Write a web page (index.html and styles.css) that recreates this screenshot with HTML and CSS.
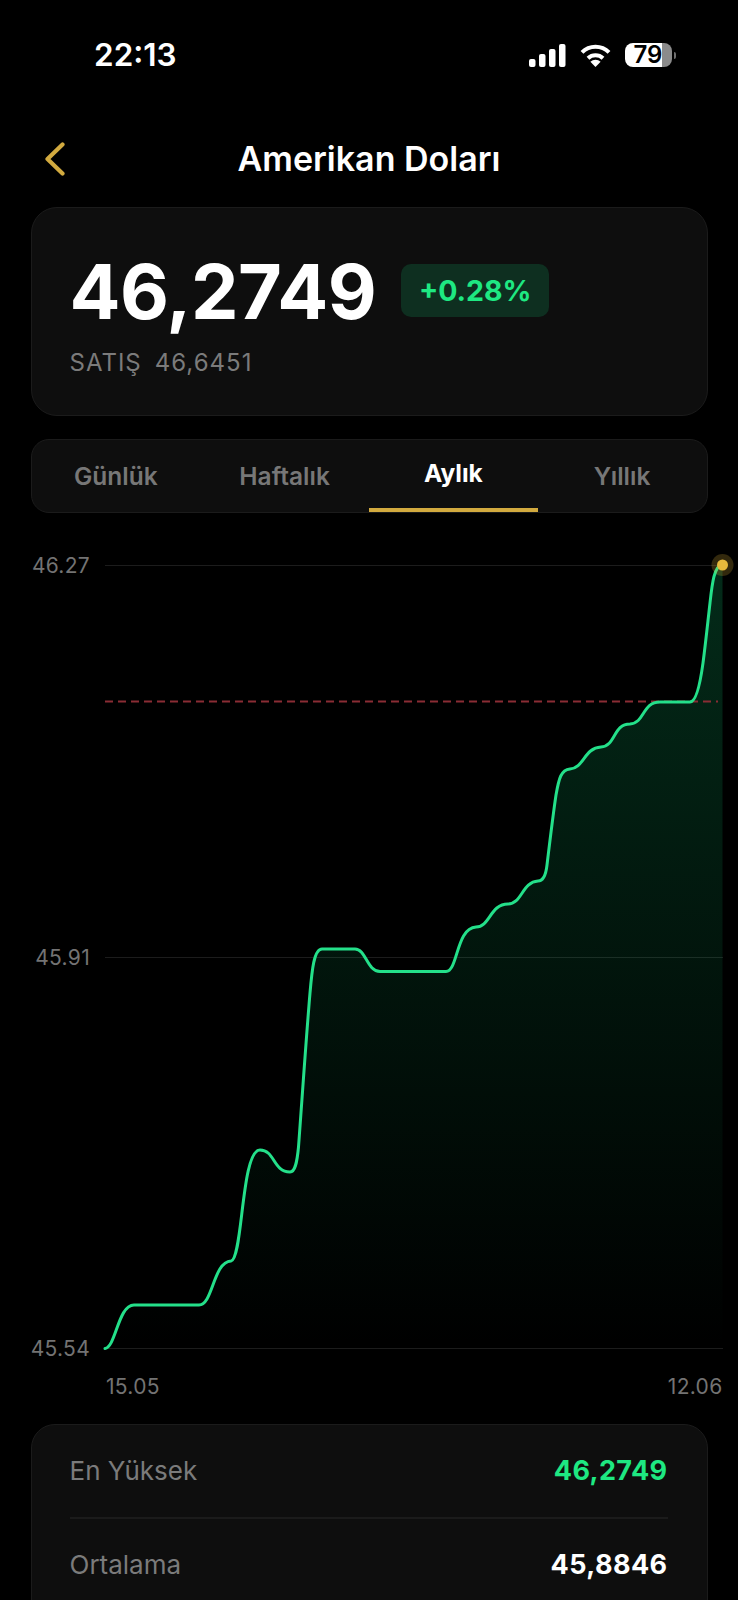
FILE: index.html
```html
<!DOCTYPE html>
<html lang="tr">
<head>
<meta charset="utf-8">
<title>Amerikan Doları</title>
<link rel="stylesheet" href="styles.css">
</head>
<body>
<div class="status">
  <span class="time">22:13</span>
  <div class="status-icons">
    <svg class="signal" width="37" height="23" viewBox="0 0 37 23"><rect x="0" y="15" width="6.5" height="8" rx="2"/><rect x="10" y="10" width="6.5" height="13" rx="2"/><rect x="20" y="5" width="6.5" height="18" rx="2"/><rect x="30" y="0" width="6.5" height="23" rx="2"/></svg>
    <svg class="wifi" width="31" height="23" viewBox="0 0 31 23"><path class="arc" d="M2 8.400A19 19 0 0 1 29 8.400"/><path class="arc" d="M8 14.200A11 11 0 0 1 23 14.200"/><path class="wedge" d="M15.500 23L10.400 17.800A7.200 7.200 0 0 1 20.600 17.800Z"/></svg>
    <div class="battery-wrap"><div class="battery">79</div><span class="battery-cap"></span></div>
  </div>
</div>

<header class="nav">
  <svg class="back" width="20" height="34" viewBox="0 0 20 34"><path d="M17.500 2.500L2.500 17L17.500 31.500"/></svg>
  <h1 class="title">Amerikan Doları</h1>
</header>

<section class="card price-card">
  <div class="price-row">
    <span class="price">46,2749</span>
    <span class="badge">+0.28%</span>
  </div>
  <div class="sell"><span>SATIŞ</span><span>46,6451</span></div>
</section>

<nav class="card tabs">
  <span class="tab">Günlük</span>
  <span class="tab">Haftalık</span>
  <span class="tab active">Aylık</span>
  <span class="tab">Yıllık</span>
</nav>

<svg class="chart" width="738" height="911" viewBox="0 513 738 911">
  <defs>
    <linearGradient id="area" gradientUnits="userSpaceOnUse" x1="0" y1="565" x2="0" y2="1348">
      <stop offset="0" stop-color="#0fd67c" stop-opacity=".2"/>
      <stop offset="1" stop-color="#0fd67c" stop-opacity="0"/>
    </linearGradient>
  </defs>
  <path class="grid" d="M105 565.500H723M105 957.500H723M105 1348.500H723"/>
  <path class="area" d="M105 1348.500C116 1347 118 1305 134 1305L199 1305C213 1305 213 1262 231 1261C243 1259 241 1150 260 1150C275 1150 273 1172 290 1172C295 1172 297 1163 298.500 1147C302 1100 306 1040 310 993C312 970 314 949 322 949L355 949C366 949 367 971.500 380 971.500L446 971.500C458 971.500 456 928 476 927C490 927 490 904 508 904C522 904 522 882 538 881C544 881 546 874 547 865C550 840 553 815 556 795C559 778 561 770 570 769C584 768 584 748 601 747C616 746 613 724 630 724C645 723 642 702 660 702L690 702C696 702 700 685 703 663C706 640 708 620 710 603C712 585 714 565 722.500 565V1348.500H105Z"/>
  <path class="avg" d="M105 701.500H718"/>
  <path class="line" d="M105 1348.500C116 1347 118 1305 134 1305L199 1305C213 1305 213 1262 231 1261C243 1259 241 1150 260 1150C275 1150 273 1172 290 1172C295 1172 297 1163 298.500 1147C302 1100 306 1040 310 993C312 970 314 949 322 949L355 949C366 949 367 971.500 380 971.500L446 971.500C458 971.500 456 928 476 927C490 927 490 904 508 904C522 904 522 882 538 881C544 881 546 874 547 865C550 840 553 815 556 795C559 778 561 770 570 769C584 768 584 748 601 747C616 746 613 724 630 724C645 723 642 702 660 702L690 702C696 702 700 685 703 663C706 640 708 620 710 603C712 585 714 565 722.500 565"/>
  <circle class="halo" cx="722.500" cy="565" r="11"/>
  <circle class="dot" cx="722.500" cy="565" r="5.500"/>
  <text class="axis end" x="90" y="572.500">46.27</text>
  <text class="axis end" x="90" y="964.500">45.91</text>
  <text class="axis end" x="90" y="1355.500">45.54</text>
  <text class="axis" x="106" y="1393.500">15.05</text>
  <text class="axis end" x="722.500" y="1393.500">12.06</text>
</svg>

<section class="card stats">
  <div class="stat"><span class="stat-label">En Yüksek</span><span class="stat-value up">46,2749</span></div>
  <div class="stat"><span class="stat-label">Ortalama</span><span class="stat-value">45,8846</span></div>
</section>
</body>
</html>
```
FILE: styles.css
```css
* { box-sizing: border-box; }
html, body { height: 1600px; overflow: hidden; }
body {
  margin: 0;
  background: #000;
  color: #fff;
  font-family: Inter, "Noto Sans", "Liberation Sans", sans-serif;
}
.status {
  height: 143px;
  padding: 37px 62px 0 94px;
  display: flex;
  justify-content: space-between;
  align-items: flex-start;
}
.time { font-size: 31.500px; font-weight: 600; line-height: 36px; letter-spacing: 0; }
.status-icons { display: flex; align-items: center; gap: 14px; padding-top: 6px; }
.signal { fill: #fff; display: block; }
.wifi { display: block; }
.arc { fill: none; stroke: #fff; stroke-width: 4; }
.wedge { fill: #fff; }
.battery-wrap { display: flex; align-items: center; gap: 2px; }
.battery {
  width: 47px; height: 24px; border-radius: 8px;
  background: linear-gradient(90deg, #fff 79%, #8b8b8b 79%);
  color: #000; font-size: 24px; font-weight: 600; line-height: 24px; text-align: center;
  padding-right: 1px;
}
.battery-cap { width: 2px; height: 7px; border-radius: 0 2px 2px 0; background: #6f6f6f; }

.nav {
  height: 32px;
  margin-bottom: 32px;
  position: relative;
  display: flex;
  justify-content: center;
  align-items: center;
}
.back { position: absolute; left: 45px; top: -1px; fill: none; stroke: #d2aa3f; stroke-width: 4.200; stroke-linecap: round; stroke-linejoin: round; }
.title { margin: 0; font-size: 34px; font-weight: 600; line-height: 32px; }

.card {
  margin: 0 30.500px;
  background: #0e0e0e;
  border: 1.500px solid #1b1b1b;
}
.price-card { height: 209px; border-radius: 26px; padding: 46px 38px 0; }
.price-row { display: flex; align-items: center; gap: 25px; }
.price { font-size: 75.500px; font-weight: 700; line-height: 75px; letter-spacing: -0.5px; }
.badge {
  width: 148px; height: 53px; border-radius: 10px;
  margin-top: -2px;
  background: #0e2f20; color: #1ee882;
  font-size: 28.500px; font-weight: 700; line-height: 53px; text-align: center;
}
.sell {
  margin-top: 19px;
  display: flex; gap: 13px;
  color: #7b7b7b; font-size: 24px; font-weight: 400; line-height: 30px; letter-spacing: 1px;
}

.tabs {
  margin-top: 23px;
  height: 74px;
  border-radius: 18px;
  display: grid;
  grid-template-columns: repeat(4, 1fr);
  overflow: hidden;
}
.tab {
  display: flex; align-items: center; justify-content: center;
  color: #777; font-size: 24.500px; font-weight: 600; padding-bottom: 0;
}
.tab.active { color: #fff; font-weight: 700; border-bottom: 4px solid #d2aa3f; padding-bottom: 2px; }

.chart { display: block; }
.grid { stroke: #1c1c1c; stroke-width: 1; fill: none; }
.area { fill: url(#area); }
.avg { stroke: #8a2c34; stroke-width: 1.800; stroke-dasharray: 8 5; fill: none; }
.line { fill: none; stroke: #24e08a; stroke-width: 3; stroke-linecap: round; stroke-linejoin: round; }
.halo { fill: #e6b93c; opacity: .22; }
.dot { fill: #e6b93c; }
.axis { fill: #737373; font-size: 21px; letter-spacing: .3px; }
.axis.end { text-anchor: end; }

.stats { border-radius: 24px 24px 0 0; padding: 0 39px 0 38px; height: 240px; }
.stat { height: 91px; display: flex; justify-content: space-between; align-items: center; }
.stat:first-child { height: 94px; border-bottom: 2px solid #1b1b1b; }
.stat-label { color: #7b7b7b; font-size: 26px; line-height: 30px; }
.stat-value { font-size: 27px; font-weight: 700; line-height: 30px; letter-spacing: .4px; }
.stat-value.up { color: #1ee882; }
```
